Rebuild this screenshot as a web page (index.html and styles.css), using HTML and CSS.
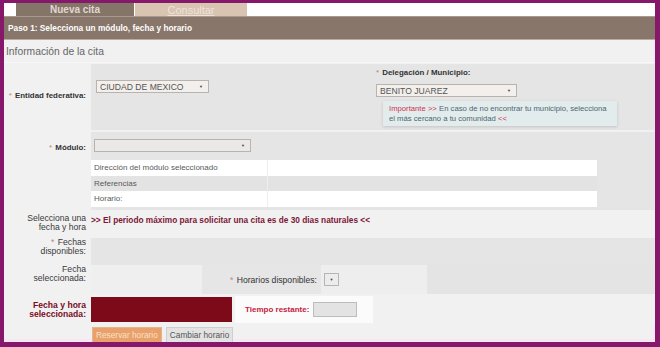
FILE: index.html
```html
<!DOCTYPE html>
<html lang="es">
<head>
<meta charset="utf-8">
<title>Nueva cita</title>
<link rel="stylesheet" href="styles.css">
</head>
<body>
<div class="frame">
  <div class="inner">
    <div class="tabs">
      <div class="tab-spacer"></div>
      <div class="tab active">Nueva cita</div>
      <div class="tab other"><span>Consultar</span></div>
    </div>
    <div class="step">Paso 1: Selecciona un módulo, fecha y horario</div>
    <div class="section-title">Información de la cita</div>

    <div class="row row-entidad">
      <div class="label"><span><span class="req">*</span> Entidad federativa:</span></div>
      <div class="field split">
        <div class="col-left">
          <div class="select sel-entidad"><span>CIUDAD DE MEXICO</span><span class="arrow">▼</span></div>
        </div>
        <div class="col-right">
          <div class="sublabel"><span class="req">*</span> Delegación / Municipio:</div>
          <div class="select sel-mun"><span>BENITO JUAREZ</span><span class="arrow">▼</span></div>
          <div class="notice">
            <div class="n-line"><span class="imp">Importante &gt;&gt;</span> <span>En caso de no encontrar tu municipio, selecciona</span></div>
            <div class="n-line"><span>el más cercano a tu comunidad</span> <span class="imp">&lt;&lt;</span></div>
          </div>
        </div>
      </div>
    </div>

    <div class="row row-modulo">
      <div class="label top"><span><span class="req">*</span> Módulo:</span></div>
      <div class="field">
        <div class="select sel-modulo"><span></span><span class="arrow">▼</span></div>
        <div class="info-table">
          <div class="it-row white"><div class="it-a">Dirección del módulo seleccionado</div><div class="it-b"></div></div>
          <div class="it-row gray"><div class="it-a">Referencias</div><div class="it-b"></div></div>
          <div class="it-row white"><div class="it-a">Horario:</div><div class="it-b"></div></div>
        </div>
      </div>
    </div>

    <div class="row row-periodo">
      <div class="label plain"><span>Selecciona una<br>fecha y hora</span></div>
      <div class="field light periodo">&gt;&gt; El periodo máximo para solicitar una cita es de 30 dias naturales &lt;&lt;</div>
    </div>

    <div class="row row-fechas">
      <div class="label plain"><span><span class="req">*</span> Fechas<br>disponibles:</span></div>
      <div class="field"></div>
    </div>

    <div class="row row-sel">
      <div class="label plain"><span>Fecha<br>seleccionada:</span></div>
      <div class="field sel-grid">
        <div class="fecha-box"></div>
        <div class="horarios">
          <span class="hl"><span class="req">*</span> Horarios disponibles:</span>
        </div>
        <div class="hor-select">
          <span class="mini-select"><span class="arrow">▼</span></span>
        </div>
        <div class="rest"></div>
      </div>
    </div>

    <div class="row row-final">
      <div class="label red"><span>Fecha y hora<br>seleccionada:</span></div>
      <div class="field light final">
        <div class="red-box"></div>
        <div class="tiempo">
          <span class="tl">Tiempo restante:</span>
          <span class="t-input"></span>
        </div>
      </div>
    </div>

    <div class="row row-buttons">
      <div class="label"></div>
      <div class="buttons">
        <span class="btn btn-primary">Reservar horario</span>
        <span class="btn btn-secondary">Cambiar horario</span>
      </div>
    </div>
  </div>
</div>
</body>
</html>
```

FILE: styles.css
```css
* { box-sizing: border-box; }
html, body { margin: 0; padding: 0; }
body {
  width: 660px;
  height: 347px;
  font-family: "Liberation Sans", Arial, sans-serif;
  background: #86186c;
}
.frame {
  width: 660px;
  height: 347px;
  padding: 3px 5px 5px 4px;
  background: #86186c;
}
.inner {
  height: 100%;
  background: #f1f1f1;
  box-shadow: inset -2px -3px 0 #f7e6f3;
  overflow: hidden;
}
.tabs {
  display: flex;
  height: 13px;
  background: #ffffff;
}
.tab-spacer { width: 12px; }
.tab {
  display: flex;
  align-items: center;
  justify-content: center;
  font-size: 10px;
  font-weight: bold;
}
.tab.active {
  width: 118px;
  background: #857468;
  color: #e2d8d2;
}
.tab.other {
  width: 112px;
  margin-left: 1px;
  background: #d9c3b1;
  color: #ede3da;
  font-size: 11px;
  font-weight: normal;
}
.tab.other span { text-decoration: underline; }
.step {
  height: 24px;
  background: #877669;
  border-top: 1px solid #a89a90;
  border-bottom: 1px solid #b8aca4;
  color: #ffffff;
  font-size: 8.3px;
  font-weight: bold;
  padding: 6px 0 0 4px;
}
.section-title {
  height: 23px;
  padding: 6px 0 0 2px;
  font-size: 10.3px;
  color: #666666;
  border-bottom: 1px solid #f8f8f8;
}
.row {
  display: grid;
  grid-template-columns: 87px 1fr;
}
.label {
  font-size: 7.9px;
  font-weight: bold;
  color: #333333;
  text-align: right;
  padding-right: 5px;
  display: flex;
  align-items: center;
  justify-content: flex-end;
  line-height: 9px;
}
.label.top { align-items: flex-start; padding-top: 11px; }
.label.plain { font-weight: normal; color: #3a3a3a; font-size: 8.6px; }
.label.red { color: #7a0c1e; font-size: 8.6px; }
.req { color: #b08a8a; font-weight: normal; margin-right: 1px; }
.field {
  background: #e5e5e5;
}
.field.light { background: #f1f1f1; }

.row-entidad { height: 66px; margin-top: 1px; }
.row-entidad .label { padding-bottom: 3px; }
.split { display: flex; }
.col-left { width: 285px; padding: 16px 0 0 5px; }
.col-right { padding-top: 4px; }
.sublabel {
  font-size: 7.9px;
  font-weight: bold;
  color: #333;
  height: 15px;
}
.select {
  display: flex;
  justify-content: space-between;
  align-items: center;
  height: 13px;
  background: #f2efec;
  border: 1px solid #b9b2ad;
  font-size: 8.6px;
  color: #555;
  padding: 0 5px 0 3px;
}
.arrow { font-size: 4px; color: #444; }
.sel-entidad { width: 113px; }
.sel-mun { width: 141px; margin-top: 1px; }
.notice {
  width: 234px;
  margin: 4px 0 0 7px;
  padding: 3px 8px 2px 6px;
  background: #e2ecec;
  box-shadow: 0 1px 3px rgba(0,0,0,0.15);
  font-size: 7.7px;
  line-height: 10px;
  color: #4e6570;
}
.n-line { white-space: nowrap; }
.imp { color: #d4304c; }

.row-modulo { height: 78px; margin-top: 2px; }
.row-modulo .field { padding: 7px 0 0 0; }
.sel-modulo { width: 157px; margin-left: 3px; background: #ebe9e7; }
.info-table {
  width: 506px;
  margin-top: 8px;
}
.it-row {
  display: grid;
  grid-template-columns: 177px 1fr;
  height: 15.5px;
  font-size: 8px;
  color: #5a5a5a;
}
.it-row.white { background: #ffffff; }
.it-row.gray { background: #e3e3e3; }
.it-a { padding: 3px 0 0 3px; border-right: 1px solid #eeeeee; }

.row-periodo { height: 28px; }
.row-periodo .label { align-items: flex-start; padding-top: 4px; }
.periodo {
  font-size: 8.3px;
  font-weight: bold;
  color: #7c1638;
  padding: 5px 0 0 0;
}

.row-fechas { height: 27px; }
.row-fechas .label { align-items: flex-start; padding-top: 0; }
.row-sel { height: 29px; }
.row-sel .label { align-items: flex-start; padding-top: 0; }
.sel-grid { display: flex; }
.fecha-box { width: 111px; background: #efefef; }
.horarios {
  width: 119px;
  display: flex;
  align-items: center;
  justify-content: flex-end;
  padding-right: 4px;
  background: #e6e6e6;
}
.hl { font-size: 8.6px; color: #333; white-space: nowrap; }
.hor-select {
  width: 106px;
  display: flex;
  align-items: center;
  padding-left: 3px;
  background: #eeeeee;
}
.mini-select {
  width: 15px;
  height: 13px;
  border: 1px solid #b5b5b5;
  background: #ececec;
  display: flex;
  align-items: center;
  justify-content: center;
}
.rest { flex: 1; background: #e4e4e4; }

.row-final { height: 31px; }
.final { display: flex; align-items: center; padding-left: 0; }
.red-box { width: 141px; height: 25px; background: #7c0a18; }
.tiempo {
  height: 27px;
  width: 138px;
  margin-left: 3px;
  background: #fbfbfb;
  display: flex;
  align-items: center;
  padding-left: 10px;
  gap: 4px;
}
.tl { font-size: 8px; font-weight: bold; color: #c8203c; }
.t-input {
  width: 44px;
  height: 15px;
  background: #e3e3e3;
  border: 1px solid #bdbdbd;
}

.row-buttons { height: 20px; }
.buttons { display: flex; align-items: center; gap: 4px; padding-left: 1px; }
.btn {
  height: 16px;
  display: inline-flex;
  align-items: center;
  padding: 0 3px;
  font-size: 8.3px;
  border: 1px solid #cfcfcf;
}
.btn-primary { background: #e9a06a; color: #f8e2c8; border-color: #e6b48a; }
.btn-secondary { background: #e3e3e3; color: #555; }
```
